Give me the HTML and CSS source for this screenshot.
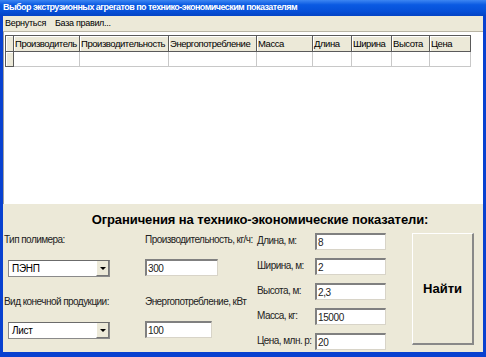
FILE: index.html
```html
<!DOCTYPE html>
<html lang="ru">
<head>
  <meta charset="UTF-8">
  <title>Выбор экструзионных агрегатов</title>
  <link rel="stylesheet" href="styles.css">
</head>
<body>
  <div class="window">
    <div class="titlebar">Выбор экструзионных агрегатов по технико-экономическим показателям</div>
    <div class="menubar">
      <span class="menu-item">Вернуться</span>
      <span class="menu-item">База правил...</span>
    </div>

    <div class="grid-area">
      <table class="grid">
        <colgroup>
          <col class="c-sel"><col class="c-maker"><col class="c-perf"><col class="c-energy">
          <col class="c-mass"><col class="c-len"><col class="c-wid"><col class="c-hgt"><col class="c-price">
        </colgroup>
        <tr class="head">
          <th></th><th>Производитель</th><th>Производительность</th><th>Энергопотребление</th>
          <th>Масса</th><th>Длина</th><th>Ширина</th><th>Высота</th><th>Цена</th>
        </tr>
        <tr class="row">
          <th></th><td></td><td></td><td></td><td></td><td></td><td></td><td></td><td></td>
        </tr>
      </table>
    </div>

    <div class="panel">
      <h2 class="panel-title">Ограничения на технико-экономические показатели:</h2>
      <div class="panel-body">
        <div class="col col-left">
          <div class="lbl">Тип полимера:</div>
          <div class="combo first"><span>ПЭНП</span><i class="drop"></i></div>
          <div class="lbl second">Вид конечной продукции:</div>
          <div class="combo first"><span>Лист</span><i class="drop"></i></div>
        </div>
        <div class="col col-mid">
          <div class="lbl">Производительность, кг/ч:</div>
          <div class="edit first w73">300</div>
          <div class="lbl second">Энергопотребление, кВт</div>
          <div class="edit first w67">100</div>
        </div>
        <div class="col col-dims">
          <div class="dim"><span class="dim-lbl">Длина, м:</span><span class="edit">8</span></div>
          <div class="dim"><span class="dim-lbl">Ширина, м:</span><span class="edit">2</span></div>
          <div class="dim"><span class="dim-lbl">Высота, м:</span><span class="edit">2,3</span></div>
          <div class="dim"><span class="dim-lbl">Масса, кг:</span><span class="edit">15000</span></div>
          <div class="dim"><span class="dim-lbl">Цена, млн. р:</span><span class="edit">20</span></div>
        </div>
        <div class="col col-btn">
          <button class="find">Найти</button>
        </div>
      </div>
    </div>
  </div>
</body>
</html>
```

FILE: styles.css
```css
html, body {
  margin: 0;
  padding: 0;
}

body {
  width: 486px;
  height: 357px;
  overflow: hidden;
  font-family: "Liberation Sans", Arial, sans-serif;
  font-size: 10px;
  color: #000;
}

.window {
  box-sizing: border-box;
  width: 486px;
  height: 357px;
  display: flex;
  flex-direction: column;
  background: #ece9d8;
  border-left: 3px solid #0841d0;
  border-right: 3px solid #0841d0;
  border-bottom: 5px solid #0841d0;
}

.titlebar {
  height: 16px;
  line-height: 15px;
  margin: 0 -3px;
  padding-left: 3px;
  background: linear-gradient(#3d86f2, #0a5ae2 30%, #0650d8 70%, #0444c4);
  color: #fff;
  font-weight: bold;
  font-size: 9px;
  letter-spacing: -0.55px;
  white-space: nowrap;
}

.menubar {
  height: 15px;
  line-height: 14px;
  display: flex;
  gap: 9px;
  padding-left: 2px;
  border-bottom: 1px solid #b8b4a4;
  font-size: 9px;
  letter-spacing: -0.3px;
}

.grid-area {
  flex: 1;
  background: #fff;
  padding: 3px 0 0 1px;
  border-left: 1px solid #a0a0a0;
}

.grid {
  border-collapse: collapse;
  table-layout: fixed;
  width: 465px;
}

.c-sel { width: 8px; }
.c-maker { width: 66px; }
.c-perf { width: 89px; }
.c-energy { width: 88px; }
.c-mass { width: 56px; }
.c-len { width: 39px; }
.c-wid { width: 40px; }
.c-hgt { width: 38px; }
.c-price { width: 41px; }

.grid th, .grid td {
  padding: 0 0 0 1px;
  font-weight: normal;
  text-align: left;
  white-space: nowrap;
  overflow: hidden;
  font-size: 9.5px;
  letter-spacing: -0.45px;
}

.head th {
  height: 15px;
  background: #ece9d8;
  border: 1px solid #5a5a5a;
  box-shadow: inset 1px 1px 0 #fff;
}

.row th {
  height: 14px;
  background: #ece9d8;
  border: 1px solid #5a5a5a;
  box-shadow: inset 1px 1px 0 #fff;
}

.row td {
  height: 14px;
  border: 1px solid #c8c8c8;
  border-top: 1px solid #5a5a5a;
}

.panel {
  height: 148px;
  box-sizing: border-box;
  padding-top: 8px;
}

.panel-title {
  margin: 0;
  height: 21px;
  line-height: 16px;
  text-align: center;
  font-size: 13px;
  letter-spacing: -0.1px;
  font-weight: bold;
  padding-left: 34px;
}

.panel-body {
  display: flex;
  padding-left: 1px;
}

.col {
  display: flex;
  flex-direction: column;
}

.col-left { width: 141px; }
.col-mid { width: 112px; }
.col-dims { width: 155px; }

.lbl {
  height: 14px;
  line-height: 14px;
  white-space: nowrap;
  letter-spacing: -0.55px;
  color: #222;
}

.lbl.second { margin-top: 18px; }

.first { margin-top: 13px; }

.combo {
  box-sizing: border-box;
  margin-left: 4px;
  width: 102px;
  height: 17px;
  background: #fff;
  border: 1px solid #8a8a8a;
  border-top-color: #6b6b6b;
  display: flex;
  align-items: center;
  justify-content: space-between;
  padding-left: 3px;
}

.combo span {
  letter-spacing: -0.3px;
}

.drop {
  box-sizing: border-box;
  width: 13px;
  height: 15px;
  background: #ece9d8;
  border-left: 1px solid #fff;
  border-right: 1px solid #777;
  border-bottom: 1px solid #777;
  position: relative;
}

.drop::after {
  content: "";
  position: absolute;
  left: 3px;
  top: 6px;
  border-left: 3px solid transparent;
  border-right: 3px solid transparent;
  border-top: 3px solid #000;
}

.edit {
  box-sizing: border-box;
  height: 17px;
  line-height: 15px;
  background: #fff;
  border: 1px solid #d8d4c8;
  border-top: 2px solid #808080;
  border-left: 2px solid #808080;
  padding-left: 1px;
  font-size: 10px;
  letter-spacing: -0.4px;
  color: #222;
}

.w73 { width: 73px; }
.w67 { width: 67px; }

.col-mid .edit { margin-top: 12px; }
.col-mid .lbl.second { margin-top: 19px; }

.dim {
  height: 25px;
  display: flex;
}

.dim-lbl {
  width: 58px;
  padding-top: 1px;
  line-height: 14px;
  letter-spacing: -0.55px;
  color: #222;
  white-space: nowrap;
}

.dim .edit {
  width: 71px;
}

.find {
  width: 62px;
  height: 112px;
  background: #ece9d8;
  border: 1px solid #fff;
  border-right: 2px solid #888;
  border-bottom: 2px solid #888;
  font-family: "Liberation Sans", Arial, sans-serif;
  font-weight: bold;
  font-size: 13px;
  padding: 0;
}
```
